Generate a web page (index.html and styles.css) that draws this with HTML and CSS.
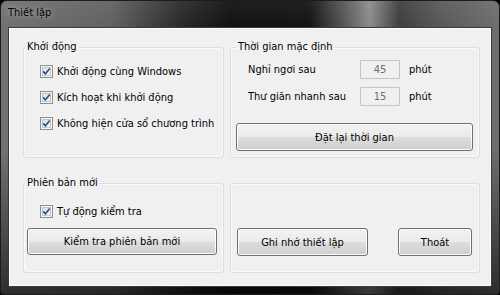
FILE: index.html
```html
<!DOCTYPE html>
<html>
<head>
    <meta charset="UTF-8">
    <title>Thiết lập</title>
    <link rel="stylesheet" href="styles.css">
</head>
<body>
    <div class="window">
        <div class="titlebar">Thiết lập</div>

        <div class="client">
            <fieldset class="group">
                <legend>Khởi động</legend>
                <div class="checks">
                    <label class="check">
                        <span class="box"><svg viewBox="0 0 13 13" width="13" height="13"><path d="M3.2 6.4 L5.4 8.8 L9.8 3.6" /></svg></span>
                        Khởi động cùng Windows
                    </label>
                    <label class="check">
                        <span class="box"><svg viewBox="0 0 13 13" width="13" height="13"><path d="M3.2 6.4 L5.4 8.8 L9.8 3.6" /></svg></span>
                        Kích hoạt khi khởi động
                    </label>
                    <label class="check">
                        <span class="box"><svg viewBox="0 0 13 13" width="13" height="13"><path d="M3.2 6.4 L5.4 8.8 L9.8 3.6" /></svg></span>
                        Không hiện cửa sổ chương trình
                    </label>
                </div>
            </fieldset>

            <fieldset class="group group-time">
                <legend>Thời gian mặc định</legend>
                <div class="time-rows">
                    <div class="time-row">
                        <span class="time-label">Nghỉ ngơi sau</span>
                        <input class="num" type="text" value="45" disabled>
                        <span class="unit">phút</span>
                    </div>
                    <div class="time-row">
                        <span class="time-label">Thư giãn nhanh sau</span>
                        <input class="num" type="text" value="15" disabled>
                        <span class="unit">phút</span>
                    </div>
                </div>
                <button class="btn btn-reset">Đặt lại thời gian</button>
            </fieldset>

            <fieldset class="group">
                <legend>Phiên bản mới</legend>
                <div class="checks checks-update">
                    <label class="check">
                        <span class="box"><svg viewBox="0 0 13 13" width="13" height="13"><path d="M3.2 6.4 L5.4 8.8 L9.8 3.6" /></svg></span>
                        Tự động kiểm tra
                    </label>
                </div>
                <button class="btn btn-update">Kiểm tra phiên bản mới</button>
            </fieldset>

            <fieldset class="group group-actions">
                <div class="actions">
                    <button class="btn btn-save">Ghi nhớ thiết lập</button>
                    <button class="btn btn-exit">Thoát</button>
                </div>
            </fieldset>
        </div>
    </div>
</body>
</html>
```

FILE: styles.css
```css
body {
    margin: 0;
    font-family: "DejaVu Sans Condensed", "Liberation Sans", sans-serif;
    font-size: 11px;
    color: #000;
    background: #000;
}

.window {
    width: 500px;
    height: 295px;
    box-sizing: border-box;
    display: flex;
    flex-direction: column;
    padding: 0 7px 7px;
    border: 1px solid #1c1c1c;
    border-radius: 7px 7px 4px 4px;
    background:
        linear-gradient(to bottom, rgba(255,255,255,0.06) 0, rgba(0,0,0,0) 26px, rgba(0,0,0,0) 150px, rgba(0,0,0,0.6) 100%),
        linear-gradient(to right, #727272 0%, #616161 22%, #2a2a2a 36%, #111 46%, #141414 62%, #6c6c6c 71%, #8c8c8c 74%, #3e3e3e 80%, #585858 88%, #6e6e6e 100%);
}

.titlebar {
    height: 26px;
    line-height: 24px;
    font-size: 11px;
    text-shadow: 0 0 5px rgba(255,255,255,0.55);
}

.client {
    flex: 1;
    box-sizing: border-box;
    background: #f0f0f0;
    border: 1px solid #3a3a3a;
    box-shadow: inset 0 0 0 1px #fbfbfb;
    padding: 12px 0 0 14px;
    display: grid;
    grid-template-columns: 201px 250px;
    grid-template-rows: 118px 97px;
    column-gap: 6px;
    row-gap: 18px;
}

.group {
    margin: 0;
    padding: 0;
    min-width: 0;
    border: 1px solid #d5dfe5;
    border-radius: 3px;
    box-shadow: inset 0 0 0 1px #fafafa;
}

.group legend {
    margin-left: 1px;
    padding: 0 2px;
    height: 14px;
    line-height: 14px;
    font-size: 11px;
}

.group-time legend {
    margin-left: 5px;
}

.group-actions {
    margin-top: 7px;
}

.checks {
    display: flex;
    flex-direction: column;
    gap: 8px;
    padding: 8px 0 0 16px;
}

.checks-update {
    padding-top: 12px;
}

.check {
    display: flex;
    align-items: center;
    height: 18px;
    gap: 4px;
    white-space: nowrap;
}

.box {
    width: 13px;
    height: 13px;
    flex: none;
    box-sizing: border-box;
    border: 1px solid #8e8f8f;
    background: linear-gradient(135deg, #d6dbe2, #f8f9fa);
    box-shadow: inset 0 0 0 1px #f4f4f4, inset 0 0 0 2px #c3c8ce;
    position: relative;
}

.box svg {
    position: absolute;
    left: -1px;
    top: -1px;
}

.box path {
    fill: none;
    stroke: #2b4a8f;
    stroke-width: 1.6;
}

.time-rows {
    display: flex;
    flex-direction: column;
    gap: 8px;
    padding: 6px 0 0 17px;
}

.time-row {
    display: flex;
    align-items: center;
    height: 19px;
}

.time-label {
    width: 112px;
}

.num {
    width: 40px;
    height: 19px;
    box-sizing: border-box;
    margin: 0;
    padding: 0;
    border: 1px solid #c4c4c4;
    border-radius: 1px;
    background: #f0f0f0;
    color: #6d6d6d;
    text-align: center;
    font-family: inherit;
    font-size: 11px;
}

.unit {
    margin-left: 9px;
}

.btn {
    height: 28px;
    box-sizing: border-box;
    margin: 0;
    padding: 0;
    border: 1px solid #707070;
    border-radius: 3px;
    background: linear-gradient(to bottom, #f2f2f2 0%, #ebebeb 48%, #dddddd 52%, #cfcfcf 100%);
    box-shadow: inset 0 0 0 1px #fcfcfc;
    font-family: inherit;
    font-size: 11px;
    color: #000;
    display: block;
}

.btn-reset {
    width: 237px;
    margin: 17px 0 0 5px;
}

.btn-update {
    width: 190px;
    height: 27px;
    margin: 8px 0 0 3px;
}

.actions {
    display: flex;
    gap: 30px;
    padding: 44px 0 0 6px;
}

.btn-save {
    width: 131px;
}

.btn-exit {
    width: 74px;
}
```
